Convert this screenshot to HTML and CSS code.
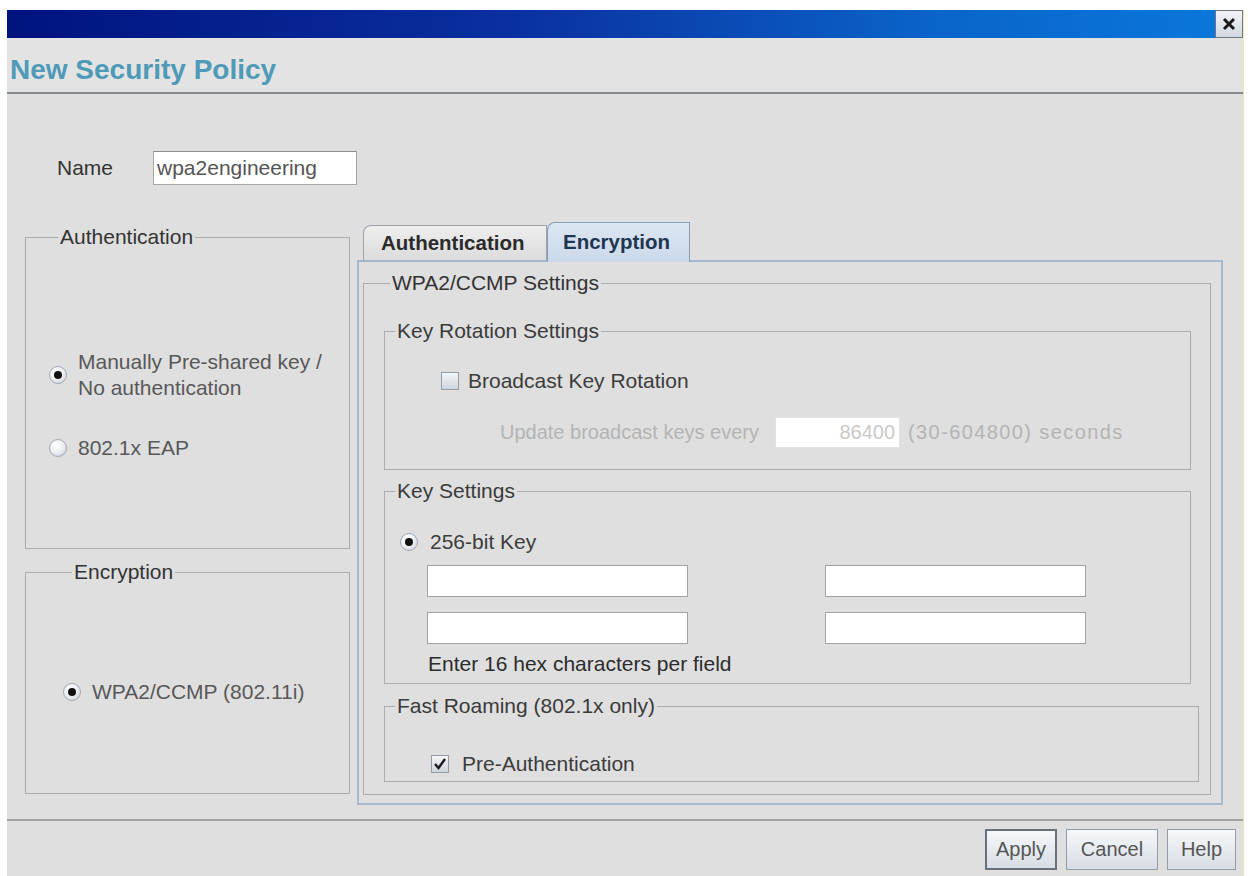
FILE: index.html
```html
<!DOCTYPE html>
<html>
<head>
  <meta name="viewport" content="width=device-width, initial-scale=1.0">
  <title>New Security Policy</title>
  <link rel="stylesheet" href="styles.css">
</head>
<body>
  <div class="window">
    <div class="titlebar">
      <div class="close">
        <svg width="16" height="16" viewBox="0 0 16 16"><path d="M3 3 L13 13 M13 3 L3 13" stroke="#1a1a1a" stroke-width="3"/></svg>
      </div>
    </div>
    <div class="header">New Security Policy</div>

    <div class="content">
      <div class="name-row">
        <span class="name-label">Name</span>
        <div class="field name-field">wpa2engineering</div>
      </div>

      <div class="main">
        <div class="left-col">
          <fieldset class="box auth-box">
            <legend>Authentication</legend>
            <div class="opt opt-first">
              <span class="radio checked"></span>
              <span class="opt-text">Manually Pre-shared key /<br>No authentication</span>
            </div>
            <div class="opt opt-second">
              <span class="radio"></span>
              <span class="opt-text">802.1x EAP</span>
            </div>
          </fieldset>

          <fieldset class="box enc-box">
            <legend>Encryption</legend>
            <div class="opt">
              <span class="radio checked"></span>
              <span class="opt-text">WPA2/CCMP (802.11i)</span>
            </div>
          </fieldset>
        </div>

        <div class="tabpane">
          <div class="tabs">
            <div class="tab">Authentication</div>
            <div class="tab selected">Encryption</div>
          </div>
          <div class="panel">
            <fieldset class="box wpa-box">
              <legend>WPA2/CCMP Settings</legend>

              <fieldset class="box sub rotation">
                <legend>Key Rotation Settings</legend>
                <div class="check-row">
                  <span class="check"></span>
                  <span>Broadcast Key Rotation</span>
                </div>
                <div class="update-row">
                  <span class="disabled">Update broadcast keys every</span>
                  <div class="field interval">86400</div>
                  <span class="disabled range">(30-604800) seconds</span>
                </div>
              </fieldset>

              <fieldset class="box sub keys">
                <legend>Key Settings</legend>
                <div class="check-row key-radio">
                  <span class="radio checked"></span>
                  <span>256-bit Key</span>
                </div>
                <div class="key-grid">
                  <div class="field key"></div>
                  <div class="field key"></div>
                  <div class="field key"></div>
                  <div class="field key"></div>
                </div>
                <div class="hint">Enter 16 hex characters per field</div>
              </fieldset>

              <fieldset class="box sub roaming">
                <legend>Fast Roaming (802.1x only)</legend>
                <div class="check-row pre-auth">
                  <span class="check checked">
                    <svg width="14" height="14" viewBox="0 0 14 14"><path d="M2 7 L5.5 11 L12 2" fill="none" stroke="#1b1b1b" stroke-width="2.4"/></svg>
                  </span>
                  <span>Pre-Authentication</span>
                </div>
              </fieldset>
            </fieldset>
          </div>
        </div>
      </div>
    </div>

    <div class="footer">
      <button class="btn default apply">Apply</button>
      <button class="btn cancel">Cancel</button>
      <button class="btn help">Help</button>
    </div>
  </div>
</body>
</html>
```

FILE: styles.css
```css
body {
  margin: 0;
  height: 876px;
  overflow: hidden;
  background-color: #fff;
  font-family: "Liberation Sans", Arial, sans-serif;
  font-size: 21px;
  color: #3c3c3c;
}

.window {
  margin: 10px 0 0 7px;
  width: 1237px;
  height: 866px;
  box-sizing: border-box;
  background-color: #dfdfdf;
  border-right: 1px solid #ece6b8;
  overflow: hidden;
}

.titlebar {
  height: 28px;
  display: flex;
  justify-content: flex-end;
  background: linear-gradient(to right, #00137f 0%, #0a2f9e 40%, #0a64c9 75%, #0a78dc 100%);
}

.close {
  width: 28px;
  height: 28px;
  box-sizing: border-box;
  display: flex;
  align-items: center;
  justify-content: center;
  background: linear-gradient(#f2f4f7, #d3d9e0);
  border: 1px solid #6d7884;
}

.header {
  height: 56px;
  padding: 15px 0 0 3px;
  box-sizing: border-box;
  background-color: #e3e3e3;
  border-bottom: 2px solid #838b90;
  font-size: 28px;
  font-weight: bold;
  line-height: 34px;
  color: #4e9ab7;
}

.content {
  height: 725px;
  padding-left: 18px;
  box-sizing: border-box;
}

.name-row {
  display: flex;
  align-items: center;
  padding: 57px 0 0 32px;
}

.name-label {
  width: 96px;
  color: #333;
}

.field {
  box-sizing: border-box;
  background-color: #fff;
  border: 1px solid #a3a7ab;
  border-top-color: #8a8e93;
}

.name-field {
  width: 204px;
  height: 34px;
  padding-left: 3px;
  line-height: 32px;
  color: #555;
}

.main {
  display: flex;
  gap: 7px;
  margin-top: 37px;
}

/* titled borders */
.box {
  margin: 0;
  padding: 0;
  min-width: 0;
  box-sizing: border-box;
  border: 1px solid #acacac;
}

.box legend {
  margin-left: 9px;
  padding: 0 2px;
  line-height: 22px;
  color: #333;
}

.left-col {
  display: flex;
  flex-direction: column;
  gap: 12px;
  margin-top: 4px;
}

.auth-box {
  width: 325px;
  height: 323px;
  padding-left: 23px;
}

.enc-box {
  width: 325px;
  height: 233px;
  padding-left: 37px;
}

.opt {
  display: flex;
  align-items: center;
  gap: 11px;
  line-height: 26px;
  margin-top: 96px;
}

.auth-box .opt-first {
  margin-top: 101px;
}

.auth-box .opt-second {
  margin-top: 34px;
}

.opt-text {
  color: #585858;
}

.radio {
  width: 18px;
  height: 18px;
  flex-shrink: 0;
  box-sizing: border-box;
  border-radius: 50%;
  border: 1px solid #a2aab3;
  background: radial-gradient(circle at 40% 35%, #ffffff 0%, #eef1f4 45%, #c4cbd3 100%);
  display: flex;
  align-items: center;
  justify-content: center;
}

.radio.checked::after {
  content: "";
  width: 8px;
  height: 8px;
  border-radius: 50%;
  background-color: #111;
}

.check {
  width: 18px;
  height: 18px;
  flex-shrink: 0;
  box-sizing: border-box;
  border: 1px solid #939ba6;
  background: linear-gradient(#f4f6f8, #cfd5dd);
  display: flex;
  align-items: center;
  justify-content: center;
}

/* tabs */
.tabpane {
  width: 866px;
}

.tabs {
  display: flex;
  align-items: flex-end;
  height: 38px;
  margin-left: 6px;
}

.tab {
  width: 184px;
  height: 35px;
  box-sizing: border-box;
  padding-left: 17px;
  line-height: 34px;
  font-size: 20.5px;
  font-weight: bold;
  color: #2b2b2b;
  background: linear-gradient(#eeeeee, #dcdcdc);
  border: 1px solid #9ba3ab;
  border-bottom: none;
  border-top-left-radius: 8px;
}

.tab.selected {
  width: 143px;
  height: 40px;
  margin-bottom: -2px;
  padding-left: 15px;
  line-height: 38px;
  color: #1f3550;
  background: linear-gradient(#dbe6f2, #cbd9ea);
  border-color: #8b9db6;
  position: relative;
}

.panel {
  height: 545px;
  box-sizing: border-box;
  border: 2px solid #a7b7cf;
  padding: 10px 10px 0 4px;
}

.wpa-box {
  height: 523px;
  padding: 0 0 0 20px;
}

.wpa-box > legend {
  margin-left: 6px;
}

.sub {
  margin-top: 26px;
  width: 807px;
}

.sub legend {
  margin-left: 10px;
  color: #3a3a3a;
}

.check-row {
  display: flex;
  align-items: center;
  gap: 9px;
  line-height: 26px;
}

.rotation .check-row {
  margin: 26px 0 0 56px;
}

.update-row {
  display: flex;
  align-items: center;
  margin: 23px 0 0 115px;
  padding-bottom: 21px;
}

.disabled {
  color: #b4b4b4;
  font-size: 20px;
}

.range {
  letter-spacing: 1.4px;
}

.interval {
  width: 125px;
  height: 31px;
  margin: 0 8px 0 16px;
  padding-right: 4px;
  text-align: right;
  line-height: 29px;
  font-size: 20px;
  color: #c9c9c9;
  border-color: #e2e2e2;
}

.keys {
  margin-top: 10px;
  padding-bottom: 6px;
}

.key-radio {
  margin: 27px 0 0 15px;
  gap: 12px;
}

.key-grid {
  display: grid;
  grid-template-columns: 261px 261px;
  column-gap: 137px;
  row-gap: 15px;
  margin: 10px 0 0 42px;
  grid-auto-flow: column;
  grid-template-rows: 32px 32px;
}

.key {
  border-color: #9fa3a8;
}

.hint {
  margin: 7px 0 0 43px;
  line-height: 26px;
  color: #2c2c2c;
}

.roaming {
  margin-top: 11px;
  width: 815px;
  padding-bottom: 4px;
}

.pre-auth {
  margin: 34px 0 0 46px;
  gap: 13px;
}

.footer {
  display: flex;
  justify-content: flex-end;
  gap: 9px;
  padding: 8px 7px 0 0;
  border-top: 2px solid #a2a2a2;
}

.btn {
  height: 41px;
  padding: 0;
  font-family: "Liberation Sans", Arial, sans-serif;
  font-size: 20px;
  color: #555;
  background: linear-gradient(#f6f8fa, #d7dde4);
  border: 1px solid #929ca6;
}

.btn.default {
  border: 2px solid #68717b;
}

.apply {
  width: 72px;
}

.cancel {
  width: 92px;
}

.help {
  width: 69px;
}
```
